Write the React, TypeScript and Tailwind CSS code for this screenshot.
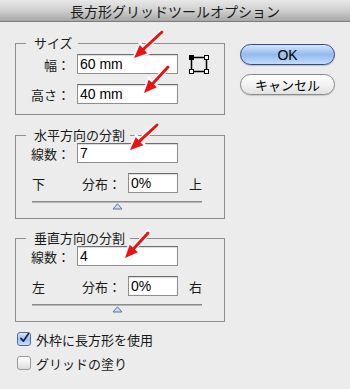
import React from "react";

const Arrow = ({ x1, y1, x2, y2 }: { x1: number; y1: number; x2: number; y2: number }) => {
  const ang = (Math.atan2(y2 - y1, x2 - x1) * 180) / Math.PI;
  const len = Math.hypot(x2 - x1, y2 - y1);
  return (
    <g transform={`translate(${x2} ${y2}) rotate(${ang})`}>
      <line x1={-len} y1={0} x2={-10} y2={0} stroke="white" strokeWidth={5.5} strokeLinecap="round" />
      <polygon points="1.5,0 -14.5,-7 -14.5,7" fill="white" stroke="white" strokeWidth={2} strokeLinejoin="round" />
      <line x1={-len} y1={0} x2={-10} y2={0} stroke="#ee1111" strokeWidth={3} strokeLinecap="round" />
      <polygon points="0,0 -13,-5.5 -13,5.5" fill="#ee1111" />
    </g>
  );
};

const Field = ({ value, w }: { value: string; w: string }) => (
  <div
    className={`${w} h-[20px] bg-white border border-[#8e8e8e] border-t-[#6e6e6e] shadow-[inset_0_1px_1px_rgba(0,0,0,0.15)] flex items-center pl-[2px] text-[14px] leading-none text-black font-['Liberation_Sans','Noto_Sans_CJK_JP',sans-serif]`}
  >
    {value}
  </div>
);

const Legend = ({ children }: { children: React.ReactNode }) => (
  <legend className="ml-[10px] pl-[8px] pr-[5px] text-[13px] leading-[16px] text-[#1a1a1a]">{children}</legend>
);

const Slider = () => (
  <div className="ml-[16px] mt-[8px] w-[170px] flex flex-col items-center">
    <div className="w-full h-[2px] bg-[#8a8a8a] border-b border-[#b8b8b8]" />
    <svg width="11" height="7" viewBox="0 0 11 7" className="mt-[0px]">
      <polygon points="5.5,0.8 10,6 1,6" fill="#c9dcf3" stroke="#5e7497" strokeWidth="1" />
    </svg>
  </div>
);

const Division = ({ title, count, left, right, top }: { title: string; count: string; left: string; right: string; top: string }) => (
  <fieldset className={`border border-[#8e8e8e] w-[210px] h-[92px] ${top}`}>
    <Legend>{title}</Legend>
    <div className="flex items-center">
      <div className="w-[54px] text-right text-[13px] leading-none text-[#1a1a1a]">線数：</div>
      <div className="ml-[7px]">
        <Field value={count} w="w-[101px]" />
      </div>
    </div>
    <div className="flex items-center mt-[10px] text-[13px] leading-none text-[#1a1a1a]">
      <div className="ml-[16px] w-[50px]">{left}</div>
      <div className="w-[46px]">分布：</div>
      <Field value="0%" w="w-[50px]" />
      <div className="ml-[11px]">{right}</div>
    </div>
    <Slider />
  </fieldset>
);

export default function App() {
  return (
    <div className="relative w-[350px] h-[389px] bg-[#ececec] overflow-hidden font-['Noto_Sans_CJK_JP','Liberation_Sans',sans-serif]">
      <div className="h-[22px] bg-linear-to-b from-[#e8e8e8] via-[#cfcfcf] to-[#a7a7a7] border-b border-[#7c7c7c] flex items-center justify-center text-[14px] leading-none text-[#1a1a1a]">
        長方形グリッドツールオプション
      </div>
      <div className="flex">
        <div className="pl-[15px] flex flex-col">
          <fieldset className="mt-[13px] border border-[#8e8e8e] w-[210px] h-[80px]">
            <Legend>サイズ</Legend>
            <div className="flex items-center mt-[3px]">
              <div className="w-[54px] text-right text-[13px] leading-none text-[#1a1a1a]">幅：</div>
              <div className="ml-[7px]">
                <Field value="60 mm" w="w-[101px]" />
              </div>
              <svg width="20" height="19" viewBox="0 0 20 19" className="ml-[11px]">
                <rect x="2.5" y="2.5" width="15" height="14" fill="none" stroke="#000" strokeWidth="1.5" />
                <rect x="0.5" y="0.5" width="4" height="4" fill="#000" stroke="#000" />
                <rect x="15.5" y="0.5" width="4" height="4" fill="#fff" stroke="#000" />
                <rect x="0.5" y="14.5" width="4" height="4" fill="#fff" stroke="#000" />
                <rect x="15.5" y="14.5" width="4" height="4" fill="#fff" stroke="#000" />
              </svg>
            </div>
            <div className="flex items-center mt-[10px]">
              <div className="w-[54px] text-right text-[13px] leading-none text-[#1a1a1a]">高さ：</div>
              <div className="ml-[7px]">
                <Field value="40 mm" w="w-[101px]" />
              </div>
            </div>
          </fieldset>
          <Division title="水平方向の分割" count="7" left="下" right="上" top="mt-[12px]" />
          <Division title="垂直方向の分割" count="4" left="左" right="右" top="mt-[11px]" />
          <div className="mt-[10px] flex flex-col gap-[10px] text-[13px] leading-none text-[#1a1a1a]">
            <div className="flex items-center">
              <div className="ml-[2px] w-[14px] h-[14px] rounded-[3px] border border-[#4f6a9c] bg-linear-to-b from-[#d9e8fa] via-[#9fc2ee] to-[#c8defa] flex items-center justify-center">
                <svg width="14" height="14" viewBox="0 0 14 14" className="-mt-[3px] ml-[1px]">
                  <path d="M2.5 7.5 L5.5 11 L12 1.5" fill="none" stroke="#16224a" strokeWidth="2.2" strokeLinecap="round" strokeLinejoin="round" />
                </svg>
              </div>
              <span className="ml-[5px]">外枠に長方形を使用</span>
            </div>
            <div className="flex items-center">
              <div className="ml-[2px] w-[14px] h-[14px] rounded-[3px] border border-[#9a9a9a] bg-linear-to-b from-[#ffffff] via-[#f0f0f0] to-[#dcdcdc]" />
              <span className="ml-[5px]">グリッドの塗り</span>
            </div>
          </div>
        </div>
        <div className="ml-[15px] mt-[22px] w-[95px] flex flex-col gap-[9px]">
          <div className="h-[21px] rounded-full border border-[#2e4a8c] bg-linear-to-b from-[#d4e5fa] via-[#93bbef] to-[#c3dcfa] flex items-center justify-center text-[14px] leading-none text-black font-['Liberation_Sans',sans-serif] shadow-[0_1px_1px_rgba(0,0,0,0.2)]">
            OK
          </div>
          <div className="h-[21px] rounded-full border border-[#8a8a8a] bg-linear-to-b from-[#ffffff] via-[#f2f2f2] to-[#e2e2e2] flex items-center justify-center text-[13px] leading-none text-black shadow-[0_1px_1px_rgba(0,0,0,0.15)]">
            キャンセル
          </div>
        </div>
      </div>
      <svg className="absolute inset-0 pointer-events-none" width="350" height="389">
        <Arrow x1={162} y1={32} x2={134} y2={58} />
        <Arrow x1={168} y1={67} x2={144} y2={93} />
        <Arrow x1={157} y1={125} x2={130} y2={150} />
        <Arrow x1={148} y1={233} x2={125} y2={258} />
      </svg>
    </div>
  );
}
